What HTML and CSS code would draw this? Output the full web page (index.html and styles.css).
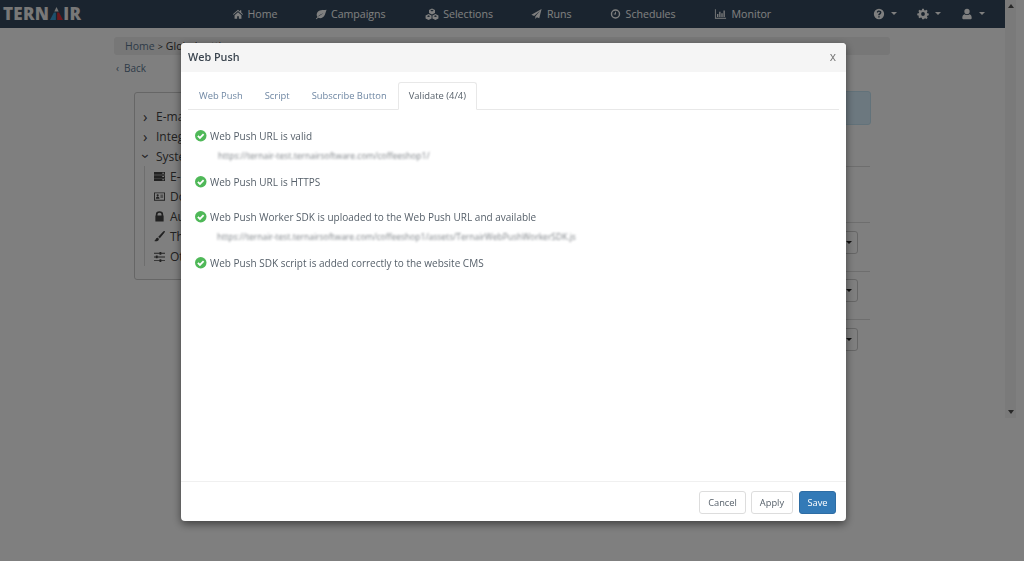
FILE: index.html
```html
<!DOCTYPE html>
<html lang="en">
<head>
<meta charset="utf-8">
<title>Ternair - Web Push</title>
<link rel="stylesheet" href="styles.css">
</head>
<body>
<div class="page">
  <nav class="navbar">
    <div class="logo">TERN<svg class="logo-a" viewBox="0 0 13 13" width="13" height="13"><path d="M6.500 0L8.700 4.500H4.300z" fill="#e8e8e8"/><path d="M3.900 5.500L0 13h5.900V5.500z" fill="#3aa0d8"/><path d="M7.100 5.500V13H13L9.100 5.500z" fill="#d8313a"/></svg>IR</div>
    <ul class="menu">
      <li><svg class="ni" viewBox="0 0 14 14"><path d="M7 2L1 7.200l.8.800L7 3.600 12.200 8l.8-.8L10.800 5.300V2.500H9.300v1.500zM3 8.500V12.500h3V9.500h2v3h3V8.500L7 5z"/></svg>Home</li>
      <li><svg class="ni" viewBox="0 0 14 14"><path d="M13.500 2C9 2.500 4.500 2 2.500 5.500 1.500 7.500 2 9.500 3 10.500 5 8 8 6.500 10 6.500 7.500 7.500 4 9.500 1 12.500l.8.500 1.800-1.500C6.500 13 10 11.500 11.500 8c.8-2 1.200-4 2-6z"/></svg>Campaigns</li>
      <li><svg class="ni ni-w" viewBox="0 0 16 14"><path fill-rule="evenodd" d="M8 .5l3.500 1.800v3.500L8 7.500 4.500 5.800V2.300zM8 2l-2 1 2 1 2-1zM4 7l3.500 1.800v3.400L4 14 .5 12.200V8.800zM4 8.500l-2 1 2 1 2-1zM12 7l3.500 1.800v3.400L12 14l-3.500-1.800V8.800zM12 8.500l-2 1 2 1 2-1z"/></svg>Selections</li>
      <li><svg class="ni ni-run" viewBox="0 0 14 14"><path d="M13.500.5L.5 8l3.500 1.500L11.500 3 5.500 10.300V13.500l2-2.400 3 1.300z"/></svg>Runs</li>
      <li><svg class="ni ni-run" viewBox="0 0 14 14"><path fill-rule="evenodd" d="M7 1a6 6 0 110 12A6 6 0 017 1zm0 1.800a4.200 4.200 0 100 8.400 4.200 4.200 0 000-8.400zM6.400 4h1.200v3.600H4.800V6.500h1.600z"/></svg>Schedules</li>
      <li><svg class="ni ni-mon" viewBox="0 0 14 14"><path d="M.5 1.500h1v10h12v1H.5zM3 7h1.500v3.500H3zM5.500 4.500H7v6H5.500zM8 6h1.500v4.500H8zM10.500 3H12v7.500h-1.500z"/></svg>Monitor</li>
    </ul>
    <div class="tools">
      <span class="tool"><svg class="ni" viewBox="0 0 14 14"><path fill-rule="evenodd" d="M7 1a6 6 0 110 12A6 6 0 017 1zM6.100 9.500v1.500h1.700V9.500zM7 3C5.500 3 4.500 3.800 4.300 5l1.500.4C6 4.800 6.300 4.500 7 4.500c.6 0 1 .3 1 .8 0 .9-1.900 1.100-1.900 2.900v.4h1.700c0-1.300 2-1.500 2-3.400C9.800 3.900 8.600 3 7 3z"/></svg><i class="caret"></i></span>
      <span class="tool"><svg class="ni" viewBox="0 0 14 14"><path fill-rule="evenodd" d="M6 .8h2l.4 1.700 1.100.5L11 2.100l1.400 1.400-.9 1.500.5 1.100 1.700.4v2L12 8.900l-.5 1.100.9 1.500-1.400 1.400-1.500-.9-1.100.5L8 13.200H6l-.4-1.700-1.100-.5-1.500.9-1.400-1.400.9-1.500L2 8.900.3 8.500v-2L2 6.100l.5-1.100-.9-1.500L3 2.100l1.500.9 1.100-.5zM7 4.800a2.200 2.200 0 100 4.400 2.200 2.200 0 000-4.400z"/></svg><i class="caret"></i></span>
      <span class="tool"><svg class="ni" viewBox="0 0 14 14"><path d="M7 1a3 3 0 110 6.200A3 3 0 017 1zM2.500 13c-.6 0-1-.4-1-1 0-2.500.7-4.500 2.800-4.700C5 8 6 8.300 7 8.300S9 8 9.700 7.300c2.100.2 2.800 2.200 2.800 4.700 0 .6-.4 1-1 1z"/></svg><i class="caret"></i></span>
    </div>
  </nav>
  <main class="content">
    <div class="crumb"><span class="crumb-link">Home</span><span class="crumb-sep">&gt;</span><span>Global settings</span></div>
    <div class="back"><span class="back-chev">&lsaquo;</span>Back</div>
    <section class="panel">
      <aside class="tree">
        <div class="tree-item"><span class="chev">&rsaquo;</span>E-mail</div>
        <div class="tree-item"><span class="chev">&rsaquo;</span>Integrations</div>
        <div class="tree-item"><span class="chev chev-open">&rsaquo;</span>System</div>
        <div class="tree-sub">
          <div class="sub-item"><svg class="si" viewBox="0 0 12 12"><path fill-rule="evenodd" d="M0 1h12v3H0zM0 4.500h12v3H0zM0 8h12v3H0zM9 2v1h2V2zM9 5.500v1h2v-1zM9 9v1h2V9z"/></svg>E-mail</div>
          <div class="sub-item"><svg class="si" viewBox="0 0 12 12"><path fill-rule="evenodd" d="M0 1.500h12v9H0zM1 2.500v7h10v-7zM4 3.500a1.200 1.200 0 110 2.400 1.200 1.200 0 010-2.400zM2 8.500c0-1.500.8-2.200 2-2.200s2 .7 2 2.200zM7 4h3v1H7zM7 6h3v1H7z"/></svg>Domains</div>
          <div class="sub-item"><svg class="si" viewBox="0 0 12 12"><path fill-rule="evenodd" d="M2 5V3.800a4 3.500 0 018 0V5h.5v6.500h-9V5zM3.800 5h4.400V3.800a2.200 2 0 00-4.400 0z"/></svg>Authentication</div>
          <div class="sub-item"><svg class="si" viewBox="0 0 12 12"><path d="M11.800.2c-.6-.5-1.400 0-2 .6L4.500 6.500c1 .3 1.500.8 1.700 1.700l4.900-5.900c.5-.6 1.100-1.500.7-2.100zM3.500 7.300C1.700 7.500 2 10 .2 10.800c1.700 1 4.900.5 5.100-1.800 0-1-.7-1.700-1.800-1.700z"/></svg>Themes</div>
          <div class="sub-item"><svg class="si" viewBox="0 0 12 12"><path d="M0 2h6V1h2v1h4v1H8v1H6V3H0zM0 6h2V5h2v1h8v1H4v1H2V7H0zM0 10h6V9h2v1h4v1H8v1H6v-1H0z"/></svg>Other</div>
        </div>
      </aside>
      <div class="detail">
        <div class="notice"></div>
        <div class="row row-a"></div>
        <div class="row row-b"></div>
        <div class="row row-c"><span class="drop"><i class="caret caret-dark"></i></span></div>
        <div class="row row-d"><span class="drop"><i class="caret caret-dark"></i></span></div>
        <div class="row row-e"><span class="drop"><i class="caret caret-dark"></i></span></div>
      </div>
    </section>
  </main>
</div>
<div class="scrollbar"><i class="arrow-up"></i><i class="arrow-down"></i></div>
<div class="backdrop"></div>
<div class="modal">
  <header class="modal-head"><h4>Web Push</h4><span class="close">x</span></header>
  <div class="modal-body">
    <ul class="tabs">
      <li>Web Push</li>
      <li>Script</li>
      <li>Subscribe Button</li>
      <li class="active">Validate (4/4)</li>
    </ul>
    <div class="check c1"><svg class="ok" viewBox="0 0 14 14"><circle cx="7" cy="7" r="7"/><path d="M3.500 7.200l2.500 2.500 4.500-4.600"/></svg>Web Push URL is valid</div>
    <div class="url u1">https://ternair-test.ternairsoftware.com/coffeeshop1/</div>
    <div class="check c2"><svg class="ok" viewBox="0 0 14 14"><circle cx="7" cy="7" r="7"/><path d="M3.500 7.200l2.500 2.500 4.500-4.600"/></svg>Web Push URL is HTTPS</div>
    <div class="check c3"><svg class="ok" viewBox="0 0 14 14"><circle cx="7" cy="7" r="7"/><path d="M3.500 7.200l2.500 2.500 4.500-4.600"/></svg>Web Push Worker SDK is uploaded to the Web Push URL and available</div>
    <div class="url u2">https://ternair-test.ternairsoftware.com/coffeeshop1/assets/TernairWebPushWorkerSDK.js</div>
    <div class="check c4"><svg class="ok" viewBox="0 0 14 14"><circle cx="7" cy="7" r="7"/><path d="M3.500 7.200l2.500 2.500 4.500-4.600"/></svg>Web Push SDK script is added correctly to the website CMS</div>
  </div>
  <footer class="modal-foot">
    <button class="btn btn-cancel">Cancel</button>
    <button class="btn btn-apply">Apply</button>
    <button class="btn btn-primary">Save</button>
  </footer>
</div>
</body>
</html>
```
FILE: styles.css
```css
* { box-sizing: border-box; }
html, body { margin: 0; height: 561px; overflow: hidden; }
body { font-family: "Open Sans", "Liberation Sans", sans-serif; font-size: 11px; color: #555f69; background: #fff; display: flex; align-items: flex-start; }
.page { width: 1005px; height: 561px; flex: none; }
.navbar { height: 28px; background: #34495e; display: flex; align-items: center; color: #fff; padding: 0 0 1px 3px; }
.logo { width: 221px; flex: none; font-weight: 800; font-size: 17px; letter-spacing: .3px; color: #f0f0f0; display: flex; align-items: center; line-height: 1; }
.logo-a { margin: 0 0 0 1px; }
.menu { list-style: none; display: flex; margin: 0; padding: 0 0 0 8px; gap: 38px; flex: none; }
.menu li { display: flex; align-items: center; font-size: 10.600px; color: #fff; }
.ni { width: 12px; height: 12px; fill: #fff; margin-right: 3.500px; flex: none; }
.ni-w { width: 16px; }
.ni-run { width: 11px; margin-right: 5px; }
.ni-mon { width: 13px; margin-right: 5px; }
.tools { margin-left: auto; display: flex; gap: 20px; padding-right: 20px; }
.tool { display: flex; align-items: center; }
.tool .ni { margin-right: 6px; }
.caret { display: block; width: 0; height: 0; border-left: 3.500px solid transparent; border-right: 3.500px solid transparent; border-top: 3.500px solid #fff; }
.caret-dark { border-top-color: #222; }
.content { padding: 9px 115px 0 114px; }
.crumb { height: 18px; background: #eee; border-radius: 3px; padding-left: 11px; display: flex; align-items: center; gap: 3px; color: #333; font-size: 10.500px; }
.crumb-link { color: #5c7690; }
.crumb-sep { font-size: 9px; }
.back { margin: 6px 0 0 2px; height: 14px; font-size: 10px; color: #5c7690; line-height: 14px; display: flex; }
.back-chev { width: 8px; }
.panel { margin: 17px 0 0 20px; width: 737px; display: flex; gap: 20px; align-items: flex-start; }
.tree { width: 190px; height: 188px; flex: none; padding-top: 13px; font-size: 12px; color: #444; border: 1px solid #ccc; border-radius: 3px; }
.tree-item { height: 20px; display: flex; align-items: center; }
.chev { width: 21px; padding-left: 8px; font-size: 15px; line-height: 1; }
.chev-open { transform: rotate(90deg); transform-origin: 11px 8px; }
.tree-sub { margin-left: 9px; border-left: 1px solid #ddd; padding-left: 9px; height: 100px; }
.sub-item { height: 20px; display: flex; align-items: center; font-size: 12px; }
.si { width: 11px; height: 11px; fill: #444; margin-right: 5px; flex: none; }
.detail { flex: 1; margin-top: -1px; }
.notice { height: 34px; background: #d9f0ff; border: 1px solid #c5e5f5; border-radius: 3px; }
.row { display: flex; justify-content: flex-end; align-items: flex-start; margin-right: 1px; }
.row-a { height: 41px; }
.row-b { height: 56px; border-top: 1px solid #ddd; }
.row-c { height: 49px; border-top: 1px solid #ddd; padding: 8px 12px 0 0; }
.row-d { height: 48px; border-top: 1px solid #ddd; padding: 7px 12px 0 0; }
.row-e { height: 48px; border-top: 1px solid #ddd; padding: 8px 12px 0 0; }
.drop { width: 40px; height: 23px; border: 1px solid #ccc; border-radius: 3px; display: flex; align-items: center; justify-content: flex-end; padding-right: 5px; }
.scrollbar { width: 11px; height: 418px; flex: none; background: #f4f4f4; display: flex; flex-direction: column; justify-content: space-between; align-items: center; padding: 4px 0; }
.arrow-up { width: 0; height: 0; border: 3px solid transparent; border-top: 0; border-bottom: 4px solid #505050; }
.arrow-down { width: 0; height: 0; border: 3px solid transparent; border-bottom: 0; border-top: 4px solid #505050; }
.backdrop { position: fixed; inset: 0; background: rgba(0, 0, 0, .5); }
.modal { position: fixed; left: 181px; top: 43px; width: 665px; height: 478px; background: #fff; border-radius: 4px; box-shadow: 0 3px 9px rgba(0, 0, 0, .5); display: flex; flex-direction: column; overflow: hidden; }
.modal-head { height: 29px; flex: none; background: #f5f5f5; display: flex; align-items: center; justify-content: space-between; padding: 0 10px 2px 7px; }
.modal-head h4 { margin: 0; font-size: 10.800px; font-weight: 600; color: #3c4650; }
.close { font-size: 12px; color: #777; }
.modal-body { flex: 1; padding: 10px 7px 0; }
.tabs { list-style: none; margin: 0 0 18px; padding: 0; height: 28px; display: flex; border-bottom: 1px solid #e8e8e8; font-size: 9.400px; color: #6f87a3; }
.tabs li { padding: 0 11px; height: 28px; line-height: 28px; }
.tabs .active { color: #555f69; background: #fff; border: 1px solid #e8e8e8; border-bottom-color: #fff; border-radius: 3px 3px 0 0; line-height: 26px; padding: 0 10px; }
.check { display: flex; align-items: center; height: 16px; font-size: 10px; color: #555f69; padding-left: 7px; }
.ok { width: 11.500px; height: 11.500px; margin-right: 3.500px; flex: none; }
.ok circle { fill: #4fb858; }
.ok path { fill: none; stroke: #fff; stroke-width: 2.200; }
.url { font-size: 8.500px; line-height: 14px; height: 14px; color: #7d8287; filter: blur(1.300px); white-space: nowrap; margin-top: 5px; }
.u1 { margin-left: 30px; }
.u2 { margin-left: 29px; }
.c2, .c4 { margin-top: 11px; }
.c3 { margin-top: 19px; }
.modal-foot { height: 40px; flex: none; border-top: 1px solid #f0f0f0; display: flex; justify-content: flex-end; align-items: flex-start; gap: 5px; padding: 9px 10px 0 0; }
.btn { font-family: inherit; font-size: 9.300px; height: 23px; padding: 0; background: #fff; color: #555f69; border: 1px solid #ddd; border-radius: 3px; }
.btn-cancel { width: 47px; }
.btn-apply { width: 42px; }
.btn-primary { width: 37px; margin-left: 1px; background: #337ab7; border-color: #2e6da4; color: #fff; }
```
